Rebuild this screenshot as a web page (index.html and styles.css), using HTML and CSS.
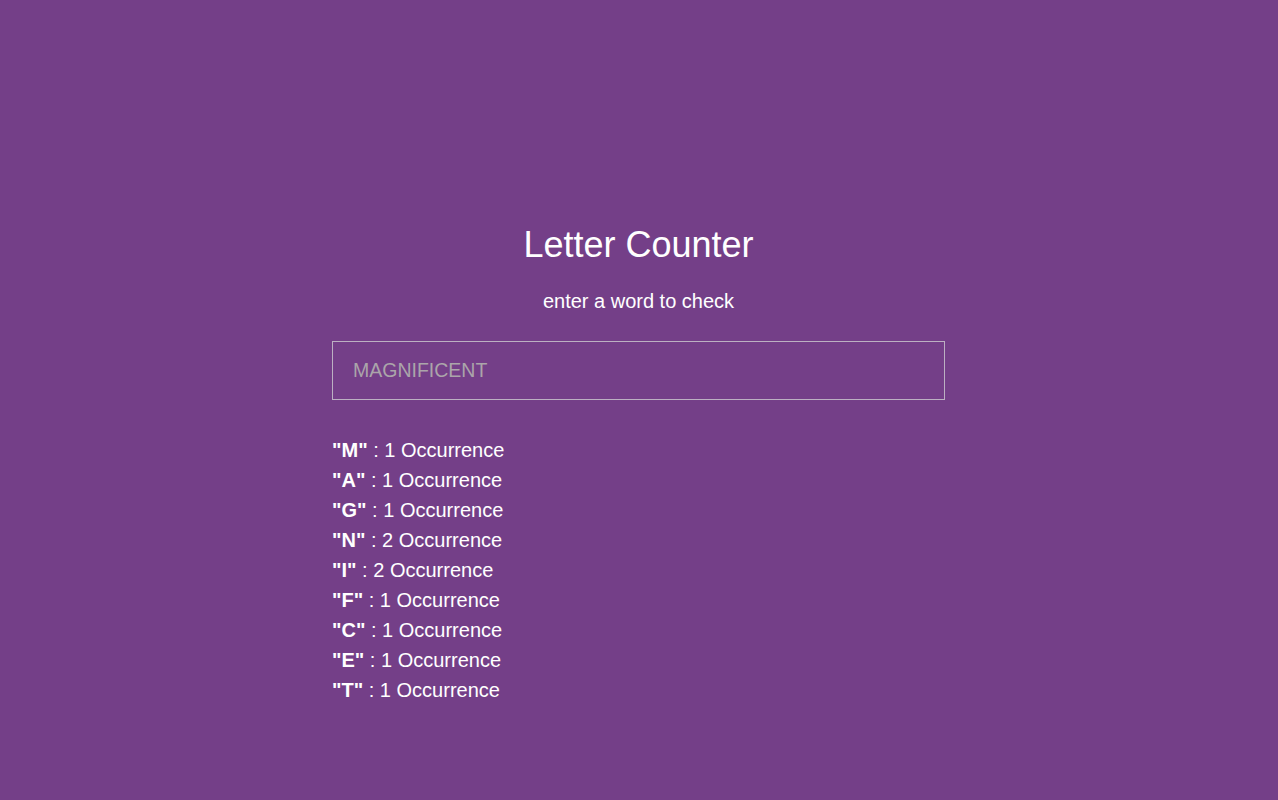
FILE: index.html
```html
<!DOCTYPE html>
<html lang="en">
<head>
<meta charset="utf-8">
<title>Letter Counter</title>
<link rel="stylesheet" href="styles.css">
</head>
<body>
<main class="app">
  <h1 class="title">Letter Counter</h1>
  <p class="subtitle">enter a word to check</p>
  <input class="word-input" type="text" placeholder="MAGNIFICENT">
  <ul class="results">
    <li><b>"M"</b> : 1 Occurrence</li>
    <li><b>"A"</b> : 1 Occurrence</li>
    <li><b>"G"</b> : 1 Occurrence</li>
    <li><b>"N"</b> : 2 Occurrence</li>
    <li><b>"I"</b> : 2 Occurrence</li>
    <li><b>"F"</b> : 1 Occurrence</li>
    <li><b>"C"</b> : 1 Occurrence</li>
    <li><b>"E"</b> : 1 Occurrence</li>
    <li><b>"T"</b> : 1 Occurrence</li>
  </ul>
</main>
</body>
</html>
```
FILE: styles.css
```css
html, body {
  margin: 0;
  height: 100%;
}
body {
  background: #743f88;
  color: #ffffff;
  font-family: "Liberation Sans", Arial, sans-serif;
  padding-right: 1px;
}
.app {
  width: 613px;
  margin: 0 auto;
  padding-top: 225px;
  display: flex;
  flex-direction: column;
}
.title {
  margin: 0;
  font-size: 36px;
  line-height: 40px;
  font-weight: 400;
  text-align: center;
}
.subtitle {
  margin: 24px 0 0;
  font-size: 20px;
  line-height: 24px;
  text-align: center;
}
.word-input {
  margin-top: 28px;
  height: 59px;
  box-sizing: border-box;
  border: 1px solid #bcb0c2;
  background: transparent;
  padding: 0 20px;
  font-family: "Liberation Sans", Arial, sans-serif;
  font-size: 19.5px;
  color: #ffffff;
  outline: none;
}
.word-input::placeholder {
  color: #aba5aa;
  opacity: 1;
}
.results {
  list-style: none;
  margin: 35px 0 0;
  padding: 0;
  font-size: 20px;
  line-height: 30px;
}
.results b {
  font-weight: 700;
}
```
